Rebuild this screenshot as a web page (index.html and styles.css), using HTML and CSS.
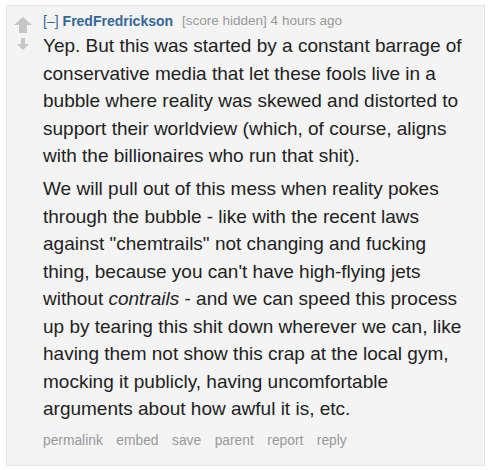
FILE: index.html
```html
<!DOCTYPE html>
<html>
<head>
<meta charset="utf-8">
<link rel="stylesheet" href="styles.css">
</head>
<body>
<div class="comment">
  <div class="votes">
    <svg class="arrow" width="18" height="16" viewBox="0 0 18 16"><path d="M9 0 L18 8 L13 8 L13 16 L5 16 L5 8 L0 8 Z" fill="#c6c6c6"/></svg>
    <svg class="arrow down" width="14" height="12" viewBox="0 0 14 12"><path d="M5 0 L9 0 L9 6 L13 6 L7 12 L1 6 L5 6 Z" fill="#c6c6c6"/></svg>
  </div>
  <div class="entry">
    <div class="tagline">
      <span class="expand">[–]</span>
      <span class="author">FredFredrickson</span>
      <span class="meta">[score hidden] 4 hours ago</span>
    </div>
    <div class="md">
      <p>Yep. But this was started by a constant barrage of conservative media that let these fools live in a bubble where reality was skewed and distorted to support their worldview (which, of course, aligns with the billionaires who run that shit).</p>
      <p>We will pull out of this mess when reality pokes through the bubble - like with the recent laws against "chemtrails" not changing and fucking thing, because you can't have high-flying jets without <em>contrails</em> - and we can speed this process up by tearing this shit down wherever we can, like having them not show this crap at the local gym, mocking it publicly, having uncomfortable arguments about how awful it is, etc.</p>
    </div>
    <ul class="buttons">
      <li>permalink</li>
      <li>embed</li>
      <li>save</li>
      <li>parent</li>
      <li>report</li>
      <li>reply</li>
    </ul>
  </div>
</div>
</body>
</html>
```

FILE: styles.css
```css
html, body {
  margin: 0;
  padding: 0;
  background: #ffffff;
}
body {
  padding: 5px 6px 5px 6px;
  font-family: "Liberation Sans", Arial, sans-serif;
}
.comment {
  width: 479px;
  height: 461px;
  box-sizing: border-box;
  background: #f4f4f4;
  border: 1px solid #e4e4e4;
  display: flex;
  padding: 6px 0 0 7px;
}
.votes {
  width: 29px;
  display: flex;
  flex-direction: column;
  align-items: flex-start;
  padding-top: 5px;
}
.arrow { display: block; }
.arrow.down { margin: 5px 0 0 2px; }
.entry {
  flex: 1;
  padding-right: 10px;
}
.tagline {
  font-size: 14px;
  line-height: 18px;
  color: #999;
  display: flex;
  gap: 4px;
}
.expand { color: #369; }
.author { color: #369; font-weight: bold; margin-right: 5px; }
.meta { font-size: 13.5px; }
.md {
  font-size: 19px;
  line-height: 27.5px;
  color: #222;
  margin-top: 2px;
}
.md p { margin: 0 0 5.5px 0; }
.buttons {
  list-style: none;
  margin: 10px 0 0 0;
  padding: 0;
  display: flex;
  gap: 13.5px;
  font-size: 13.8px;
  color: #999;
}
```
